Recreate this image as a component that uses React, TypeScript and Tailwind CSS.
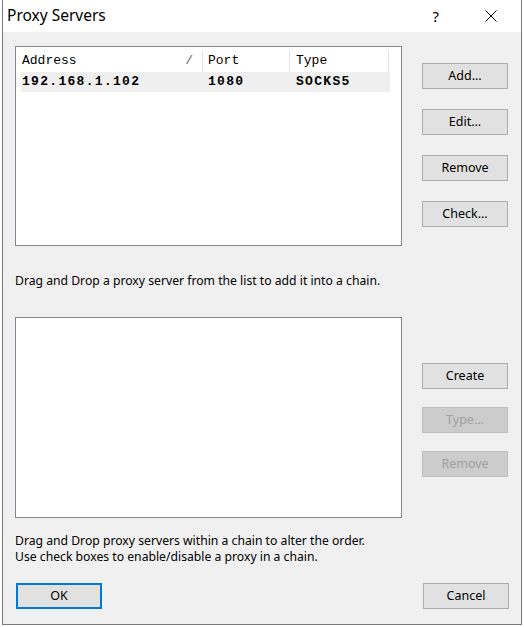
import { type ReactNode } from 'react'

// ─── Button ───────────────────────────────────────────────────────────────────
function WinButton({ children, disabled, focused }: { children: ReactNode; disabled?: boolean; focused?: boolean }) {
  const base = 'flex h-[26px] w-[86px] items-center justify-center text-[12.5px] leading-none'
  if (disabled) return <div className={`${base} border border-[#bfbfbf] bg-[#cccccc] text-[#a0a0a0]`}>{children}</div>
  if (focused) return <div className={`${base} border-2 border-[#0078d7] bg-[#e1e1e1] text-black`}>{children}</div>
  return <div className={`${base} border border-[#adadad] bg-[#e1e1e1] text-black`}>{children}</div>
}

// ─── Proxy list ───────────────────────────────────────────────────────────────
function ProxyList() {
  return (
    <div className="h-[200px] w-[387px] border border-[#828790] bg-white" style={{ fontFamily: '"Liberation Mono", monospace' }}>
      <div className="flex h-[25px] pt-[3px] text-[13px] text-black">
        <div className="flex w-[187px] items-center justify-between border-r border-[#e5e5e5] pl-[6px] pr-[9px]">
          <span>Address</span>
          <span className="text-[#666]">/</span>
        </div>
        <div className="flex w-[87px] items-center border-r border-[#e5e5e5] pl-[5px]">Port</div>
        <div className="flex w-[99px] items-center border-r border-[#e5e5e5] pl-[6px]">Type</div>
      </div>
      <div className="ml-[5px] flex h-[20px] w-[369px] items-center bg-[#efefef] text-[13px] font-bold tracking-[1.3px] text-black">
        <div className="w-[187px] pl-[1px]">192.168.1.102</div>
        <div className="w-[88px]">1080</div>
        <div>SOCKS5</div>
      </div>
    </div>
  )
}

export default function App() {
  return (
    <div className="h-[627px] w-[524px] bg-white" style={{ fontFamily: '"Noto Sans", "Liberation Sans", sans-serif' }}>
      <div className="ml-[2px] flex h-[625px] w-[520px] flex-col border-x border-b border-[#7a7a7a] bg-[#f0f0f0]">
        {/* Title bar */}
        <div className="flex h-[32px] items-center bg-white pl-[4px]">
          <span className="text-[15.5px] text-black">Proxy Servers</span>
          <span className="ml-auto mr-[46px] text-[15px] text-black">?</span>
          <svg width="12" height="12" viewBox="0 0 12 12" className="mr-[24px]">
            <path d="M0.5 0.5 L11.5 11.5 M11.5 0.5 L0.5 11.5" stroke="#000" strokeWidth="1" />
          </svg>
        </div>

        <div className="flex flex-col pl-[12px] pt-[14px]">
          <div className="flex">
            <ProxyList />
            <div className="ml-[20px] flex flex-col gap-[20px] pt-[17px]">
              <WinButton>Add...</WinButton>
              <WinButton>Edit...</WinButton>
              <WinButton>Remove</WinButton>
              <WinButton>Check...</WinButton>
            </div>
          </div>

          <p className="mt-[27px] h-[16px] text-[12.2px] leading-[16px] text-black">
            Drag and Drop a proxy server from the list to add it into a chain.
          </p>

          <div className="mt-[28px] flex">
            <div className="h-[201px] w-[387px] border border-[#828790] bg-white" />
            <div className="ml-[20px] flex flex-col gap-[18px] pt-[46px]">
              <WinButton>Create</WinButton>
              <WinButton disabled>Type...</WinButton>
              <WinButton disabled>Remove</WinButton>
            </div>
          </div>

          <div className="mt-[15px] text-[12.2px] leading-[16px] text-black">
            <p>Drag and Drop proxy servers within a chain to alter the order.</p>
            <p>Use check boxes to enable/disable a proxy in a chain.</p>
          </div>

          <div className="mt-[18px] flex pr-[12px]">
            <div className="ml-[1px]">
              <WinButton focused>OK</WinButton>
            </div>
            <div className="ml-auto">
              <WinButton>Cancel</WinButton>
            </div>
          </div>
        </div>
      </div>
    </div>
  )
}
